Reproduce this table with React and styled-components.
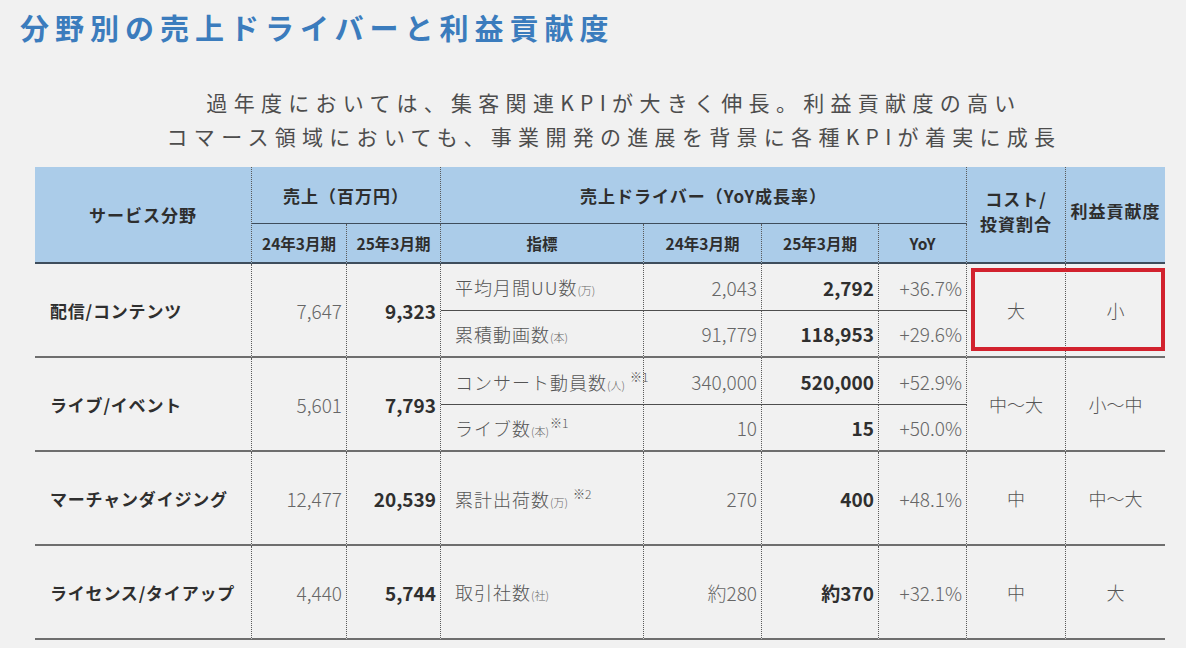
import React from 'react';
import styled, { createGlobalStyle } from 'styled-components';

const GlobalStyle = createGlobalStyle`
  html, body {
    margin: 0;
    padding: 0;
    background: #f1f1f1;
  }
  body {
    font-family: "Noto Sans CJK JP", "Noto Sans", sans-serif;
    color: #444;
  }
`;

const ROW_LINE = '2px solid #6e6e6e';
const SUB_LINE = '1.5px solid #4e4e4e';
const HEAD_LINE = '2px solid #3e4d5c';
const DOTTED = '1px dotted #5a5a5a';

const Page = styled.div`
  width: 1186px;
  height: 648px;
  overflow: hidden;
  box-sizing: border-box;
  padding: 10px 0 0 20px;
`;

const Title = styled.h1`
  margin: 0;
  font-size: 29px;
  line-height: 35px;
  font-weight: 700;
  letter-spacing: 6px;
  color: #3b7cbd;
`;

const Lead = styled.p`
  margin: 40px 0 0 15px;
  width: 1130px;
  padding-left: 28px;
  box-sizing: border-box;
  text-align: center;
  font-size: 21px;
  line-height: 34px;
  letter-spacing: 6.3px;
  font-weight: 400;
  color: #4d4d4d;
`;

const Table = styled.div`
  margin: 14px 0 0 15px;
  display: grid;
  grid-template-columns: 217px 95px 94px 203px 118px 117px 88px 99px 99px;
  grid-template-rows: 57px 40px repeat(8, 47px);
`;

const HeadCell = styled.div`
  grid-column: span ${p => p.$cs || 1};
  grid-row: span ${p => p.$rs || 1};
  display: flex;
  align-items: center;
  justify-content: center;
  text-align: center;
  box-sizing: border-box;
  background: #abcce9;
  color: #2e2e2e;
  font-weight: 700;
  font-size: ${p => (p.$small ? '15.5px' : '17px')};
  line-height: 25px;
  letter-spacing: ${p => (p.$small ? '0' : '1px')};
  border-right: ${p => (p.$last ? 'none' : DOTTED)};
  border-bottom: ${p => (p.$top ? '1.5px solid #3e4d5c' : HEAD_LINE)};
  padding-bottom: ${p => (p.$lift ? '8px' : '0')};
`;

const Cell = styled.div`
  grid-row: span ${p => p.$rs || 1};
  display: flex;
  align-items: center;
  box-sizing: border-box;
  border-right: ${p => (p.$last ? 'none' : DOTTED)};
  border-bottom: ${p => (p.$sub ? SUB_LINE : ROW_LINE)};
`;

const Label = styled(Cell)`
  padding-left: 15px;
  font-size: 17px;
  font-weight: 700;
  letter-spacing: 0.8px;
  color: #2f2f2f;
`;

const Num = styled(Cell)`
  justify-content: flex-end;
  padding-right: 4px;
  font-size: 19px;
  font-weight: ${p => (p.$strong ? 700 : 300)};
  color: ${p => (p.$strong ? '#2f2f2f' : '#666')};
`;

const Indicator = styled(Cell)`
  padding-left: 14px;
`;

const IndicatorText = styled.span`
  white-space: nowrap;
  font-size: 18px;
  font-weight: 300;
  letter-spacing: 1px;
  color: #555;
`;

const Unit = styled.span`
  font-size: 11px;
  letter-spacing: 0;
  color: #666;
`;

const Note = styled.span`
  font-size: 12px;
  letter-spacing: 0;
  color: #555;
  vertical-align: 8px;
  margin-left: ${p => (p.$gap ? '5px' : '1px')};
`;

const Rank = styled(Cell)`
  justify-content: center;
  font-size: 18px;
  font-weight: 300;
  color: #555;
`;

const Highlight = styled.div`
  grid-column: span 2;
  grid-row: span 2;
  position: relative;
  display: grid;
  grid-template-columns: 1fr 1fr;
  border-bottom: ${ROW_LINE};

  &::after {
    content: '';
    position: absolute;
    top: 4px;
    left: 4px;
    right: 0;
    bottom: 5px;
    border: 4.5px solid #d2222e;
    pointer-events: none;
  }
`;

const RankInner = styled.div`
  display: flex;
  align-items: center;
  justify-content: center;
  font-size: 18px;
  font-weight: 300;
  color: #555;
  border-right: ${p => (p.$last ? 'none' : DOTTED)};
`;

const segments = [
  {
    label: '配信/コンテンツ',
    prev: '7,647',
    cur: '9,323',
    kpis: [
      { name: '平均月間UU数', unit: '万', prev: '2,043', cur: '2,792', yoy: '+36.7%' },
      { name: '累積動画数', unit: '本', prev: '91,779', cur: '118,953', yoy: '+29.6%' },
    ],
    cost: '大',
    profit: '小',
    highlight: true,
  },
  {
    label: 'ライブ/イベント',
    prev: '5,601',
    cur: '7,793',
    kpis: [
      { name: 'コンサート動員数', unit: '人', note: '※1', gap: true, prev: '340,000', cur: '520,000', yoy: '+52.9%' },
      { name: 'ライブ数', unit: '本', note: '※1', prev: '10', cur: '15', yoy: '+50.0%' },
    ],
    cost: '中〜大',
    profit: '小〜中',
  },
  {
    label: 'マーチャンダイジング',
    prev: '12,477',
    cur: '20,539',
    kpis: [
      { name: '累計出荷数', unit: '万', note: '※2', gap: true, prev: '270', cur: '400', yoy: '+48.1%' },
    ],
    cost: '中',
    profit: '中〜大',
  },
  {
    label: 'ライセンス/タイアップ',
    prev: '4,440',
    cur: '5,744',
    kpis: [
      { name: '取引社数', unit: '社', prev: '約280', cur: '約370', yoy: '+32.1%' },
    ],
    cost: '中',
    profit: '大',
  },
];

const KpiCells = ({ kpi, rs, sub }) => (
  <>
    <Indicator $rs={rs} $sub={sub}>
      <IndicatorText>
        {kpi.name}
        <Unit>({kpi.unit})</Unit>
        {kpi.note && <Note $gap={kpi.gap}>{kpi.note}</Note>}
      </IndicatorText>
    </Indicator>
    <Num $rs={rs} $sub={sub}>{kpi.prev}</Num>
    <Num $rs={rs} $sub={sub} $strong>{kpi.cur}</Num>
    <Num $rs={rs} $sub={sub}>{kpi.yoy}</Num>
  </>
);

const Segment = ({ seg }) => {
  const single = seg.kpis.length === 1;
  return (
    <>
      <Label $rs={2}>{seg.label}</Label>
      <Num $rs={2}>{seg.prev}</Num>
      <Num $rs={2} $strong>{seg.cur}</Num>
      <KpiCells kpi={seg.kpis[0]} rs={single ? 2 : 1} sub={!single} />
      {seg.highlight ? (
        <Highlight>
          <RankInner>{seg.cost}</RankInner>
          <RankInner $last>{seg.profit}</RankInner>
        </Highlight>
      ) : (
        <>
          <Rank $rs={2}>{seg.cost}</Rank>
          <Rank $rs={2} $last>{seg.profit}</Rank>
        </>
      )}
      {!single && <KpiCells kpi={seg.kpis[1]} rs={1} />}
    </>
  );
};

export default function App() {
  return (
    <>
      <GlobalStyle />
      <Page>
        <Title>分野別の売上ドライバーと利益貢献度</Title>
        <Lead>
          過年度においては、集客関連KPIが大きく伸長。利益貢献度の高い
          <br />
          コマース領域においても、事業開発の進展を背景に各種KPIが着実に成長
        </Lead>
        <Table>
          <HeadCell $rs={2}>サービス分野</HeadCell>
          <HeadCell $cs={2} $top>売上（百万円）</HeadCell>
          <HeadCell $cs={4} $top>売上ドライバー（YoY成長率）</HeadCell>
          <HeadCell $rs={2} $lift>コスト/<br />投資割合</HeadCell>
          <HeadCell $rs={2} $lift $last>利益貢献度</HeadCell>
          <HeadCell $small>24年3月期</HeadCell>
          <HeadCell $small>25年3月期</HeadCell>
          <HeadCell $small>指標</HeadCell>
          <HeadCell $small>24年3月期</HeadCell>
          <HeadCell $small>25年3月期</HeadCell>
          <HeadCell $small>YoY</HeadCell>
          {segments.map(seg => (
            <Segment key={seg.label} seg={seg} />
          ))}
        </Table>
      </Page>
    </>
  );
}
